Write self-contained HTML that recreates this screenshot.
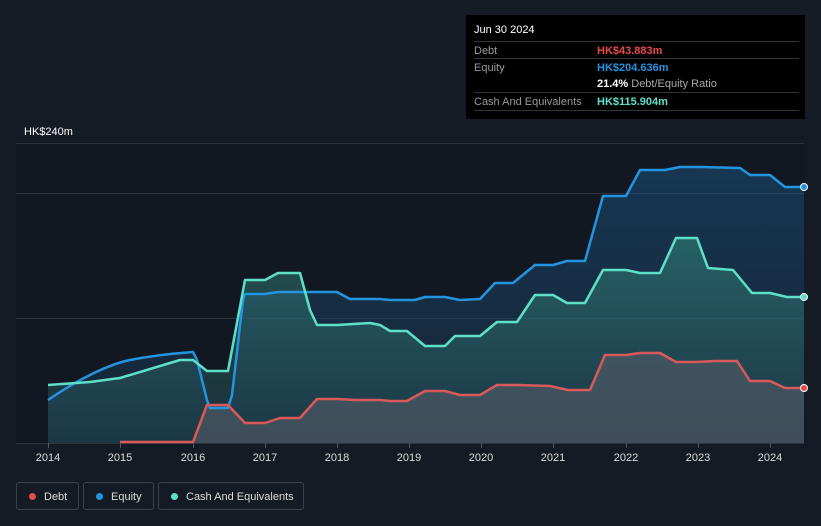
<!DOCTYPE html>
<html><head><style>
body{margin:0;width:821px;height:526px;background:#151b24;font-family:"Liberation Sans",sans-serif;overflow:hidden;position:relative}
.t{position:absolute;font-size:11px;color:#fff}
.tip{position:absolute;left:466px;top:15px;width:339px;height:104px;background:#000;}
.tip .r{position:absolute;left:8px;width:325px;border-top:1px solid #333;height:17px;font-size:11px;color:#999}
.tip .v{position:absolute;left:123px;top:3px;font-weight:bold}
.lg{position:absolute;top:482px;height:28px;border:1px solid #3a414c;border-radius:3px;font-size:11px;color:#ddd;line-height:28px;box-sizing:border-box}
.lg i{display:inline-block;width:7px;height:7px;border-radius:50%;margin:0 8px 0 12px;vertical-align:0}
</style></head><body>
<div class="tip">
<div style="position:absolute;left:8px;top:9px;font-size:11px;color:#fff">Jun 30 2024</div>
<div class="r" style="top:26px"><span style="position:absolute;top:3px">Debt</span><span class="v" style="color:#e84b4b">HK$43.883m</span></div>
<div class="r" style="top:43px"><span style="position:absolute;top:3px">Equity</span><span class="v" style="color:#2394e0">HK$204.636m</span></div>
<div class="r" style="top:60px;border-top:none"><span class="v" style="color:#fff">21.4% <span style="font-weight:normal;color:#aaa">Debt/Equity Ratio</span></span></div>
<div class="r" style="top:77px"><span style="position:absolute;top:3px">Cash And Equivalents</span><span class="v" style="color:#5ee0c8">HK$115.904m</span></div>
<div style="position:absolute;left:8px;top:95px;width:325px;border-top:1px solid #333"></div>
</div>
<div class="t" style="left:24px;top:126px">HK$240m</div>
<div class="t" style="left:24px;top:425px">HK$0</div>
<svg width="821" height="526" style="position:absolute;left:0;top:0">
<defs>
<linearGradient id="ge" x1="0" y1="0" x2="0" y2="1"><stop offset="0" stop-color="#1b4f7a" stop-opacity=".55"/><stop offset="1" stop-color="#1b3a55" stop-opacity=".4"/></linearGradient>
<linearGradient id="gc" x1="0" y1="0" x2="0" y2="1"><stop offset="0" stop-color="#3a9a8c" stop-opacity=".45"/><stop offset="1" stop-color="#2a5a60" stop-opacity=".35"/></linearGradient>
</defs>
<rect x="16" y="143" width="788" height="300" fill="#111822"/>
<g stroke="#2c333d" stroke-width="1"><line x1="16" y1="143.5" x2="804" y2="143.5"/><line x1="16" y1="193.5" x2="804" y2="193.5"/><line x1="16" y1="318.5" x2="804" y2="318.5"/><line x1="16" y1="443.5" x2="804" y2="443.5"/></g>
<path fill="url(#ge)" d="M48,400 C80,378 110,364 130,360 C160,354 180,353 193,352 L197,360 L207,400 L210,408 L228,408 L232,395 L243,300 L245,294 L265,294 L278,292 L337,292 L350,299 L380,299 L390,300 L415,300 L425,297 L445,297 L460,300 L480,299 L495,283 L513,283 L535,265 L553,265 L567,261 L585,261 L603,196 L626,196 L640,170 L665,170 L680,167 L700,167 L740,168 L750,175 L770,175 L785,187 L804,187 L804,443 L48,443Z"/>
<path fill="url(#gc)" d="M48,385 L90,382 L120,378 L160,366 L180,360 L193,360 L207,371 L228,371 L245,280 L265,280 L278,273 L300,273 L310,310 L317,325 L337,325 L370,323 L380,325 L390,331 L407,331 L425,346 L445,346 L455,336 L480,336 L497,322 L517,322 L535,295 L553,295 L567,303 L585,303 L603,270 L626,270 L640,273 L660,273 L676,238 L697,238 L708,268 L733,270 L752,293 L770,293 L787,297 L804,297 L804,443 L48,443Z"/>
<path fill="#5a5f6a" fill-opacity=".55" d="M120,442 L193,442 L207,405 L228,405 L245,423 L265,423 L280,418 L300,418 L317,399 L337,399 L355,400 L380,400 L390,401 L407,401 L425,391 L445,391 L460,395 L480,395 L497,385 L517,385 L550,386 L568,390 L590,390 L605,355 L626,355 L640,353 L660,353 L676,362 L697,362 L715,361 L737,361 L750,381 L770,381 L785,388 L804,388 L804,443 L120,443Z"/>
<g fill="none" stroke-width="2.5" stroke-linejoin="round">
<path stroke="#2394e0" d="M48,400 C80,378 110,364 130,360 C160,354 180,353 193,352 L197,360 L207,400 L210,408 L228,408 L232,395 L243,300 L245,294 L265,294 L278,292 L337,292 L350,299 L380,299 L390,300 L415,300 L425,297 L445,297 L460,300 L480,299 L495,283 L513,283 L535,265 L553,265 L567,261 L585,261 L603,196 L626,196 L640,170 L665,170 L680,167 L700,167 L740,168 L750,175 L770,175 L785,187 L804,187"/>
<path stroke="#5ee0c8" d="M48,385 L90,382 L120,378 L160,366 L180,360 L193,360 L207,371 L228,371 L245,280 L265,280 L278,273 L300,273 L310,310 L317,325 L337,325 L370,323 L380,325 L390,331 L407,331 L425,346 L445,346 L455,336 L480,336 L497,322 L517,322 L535,295 L553,295 L567,303 L585,303 L603,270 L626,270 L640,273 L660,273 L676,238 L697,238 L708,268 L733,270 L752,293 L770,293 L787,297 L804,297"/>
<path stroke="#d9595b" d="M120,442 L193,442 L207,405 L228,405 L245,423 L265,423 L280,418 L300,418 L317,399 L337,399 L355,400 L380,400 L390,401 L407,401 L425,391 L445,391 L460,395 L480,395 L497,385 L517,385 L550,386 L568,390 L590,390 L605,355 L626,355 L640,353 L660,353 L676,362 L697,362 L715,361 L737,361 L750,381 L770,381 L785,388 L804,388"/>
</g>
<circle cx="804" cy="187" r="3.5" fill="#2394e0" stroke="#fff" stroke-width="1"/>
<circle cx="804" cy="297" r="3.5" fill="#5ee0c8" stroke="#fff" stroke-width="1"/>
<circle cx="804" cy="388" r="3.5" fill="#e84b4b" stroke="#fff" stroke-width="1"/>
<g stroke="#555" stroke-width="1"><line x1="48.5" y1="443" x2="48.5" y2="448"/><line x1="120.5" y1="443" x2="120.5" y2="448"/><line x1="193.5" y1="443" x2="193.5" y2="448"/><line x1="265.5" y1="443" x2="265.5" y2="448"/><line x1="337.5" y1="443" x2="337.5" y2="448"/><line x1="409.5" y1="443" x2="409.5" y2="448"/><line x1="481.5" y1="443" x2="481.5" y2="448"/><line x1="553.5" y1="443" x2="553.5" y2="448"/><line x1="626.5" y1="443" x2="626.5" y2="448"/><line x1="698.5" y1="443" x2="698.5" y2="448"/><line x1="770.5" y1="443" x2="770.5" y2="448"/></g>
<g fill="#ddd" font-size="11" font-family="Liberation Sans" text-anchor="middle">
<text x="48" y="461">2014</text><text x="120" y="461">2015</text><text x="193" y="461">2016</text><text x="265" y="461">2017</text><text x="337" y="461">2018</text><text x="409" y="461">2019</text><text x="481" y="461">2020</text><text x="553" y="461">2021</text><text x="626" y="461">2022</text><text x="698" y="461">2023</text><text x="770" y="461">2024</text>
</g>
</svg>
<div class="lg" style="left:16px;width:63px"><i style="background:#e84b4b"></i>Debt</div>
<div class="lg" style="left:83px;width:71px"><i style="background:#2394e0"></i>Equity</div>
<div class="lg" style="left:158px;width:146px"><i style="background:#5ee0c8"></i>Cash And Equivalents</div>
</body></html>
